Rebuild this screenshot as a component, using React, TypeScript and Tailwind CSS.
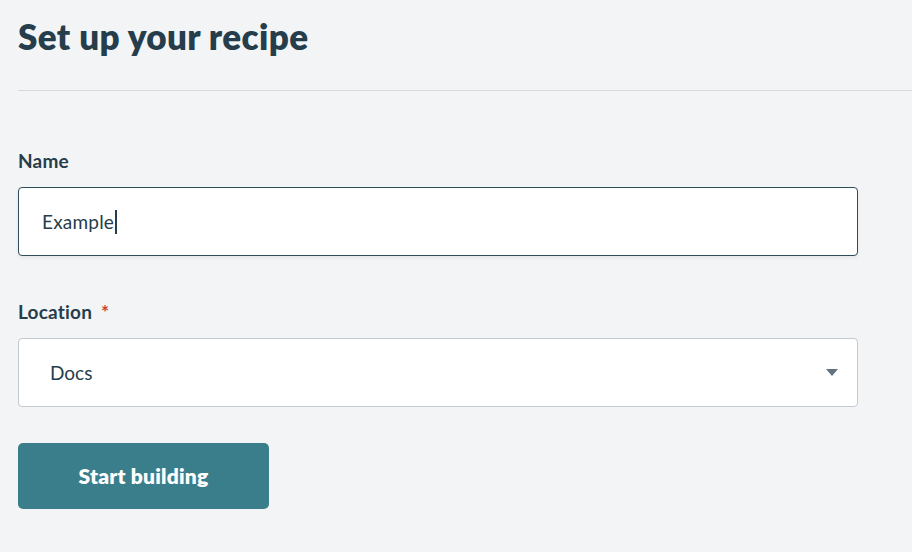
export default function App() {
  return (
    <div className="min-h-[552px] w-[912px] bg-[#f3f4f6] text-[#263d4b] font-['Lato','Open_Sans',sans-serif]">
      <div className="pl-[18px] pt-[14px]">
        <h1 className="text-[35px] font-extrabold leading-[44px] tracking-[0.4px]">Set up your recipe</h1>
        <div className="mt-[32px] border-t border-[#d6d9dd]" />

        <div className="mt-[57px] w-[840px]">
          <label className="block text-[19px] font-bold leading-[25px] tracking-[0.2px]">Name</label>
          <div className="mt-[14px] flex h-[69px] items-center rounded-[4px] border border-[#2d4d58] bg-white pl-[23px] shadow-[0_2px_4px_rgba(0,0,0,0.06)]">
            <span className="text-[19px] leading-none tracking-[0.2px]">Example</span>
            <span className="ml-[1px] h-[24px] w-[2px] bg-[#263d4b]" />
          </div>

          <label className="mt-[43px] block text-[19px] font-bold leading-[25px] tracking-[0.2px]">
            Location <span className="ml-[4px] text-[#c9432e]">*</span>
          </label>
          <div className="mt-[14px] flex h-[69px] items-center justify-between rounded-[4px] border border-[#c3c9cf] bg-white pl-[31px] pr-[19px]">
            <span className="text-[19px] leading-none">Docs</span>
            <svg width="12" height="7" viewBox="0 0 12 7">
              <path d="M0 0 L12 0 L6 7 Z" fill="#637380" />
            </svg>
          </div>

          <button className="mt-[36px] h-[66px] w-[251px] rounded-[5px] bg-[#3b7e8b] text-[21px] font-extrabold tracking-[0.2px] text-white">
            Start building
          </button>
        </div>
      </div>
    </div>
  );
}
